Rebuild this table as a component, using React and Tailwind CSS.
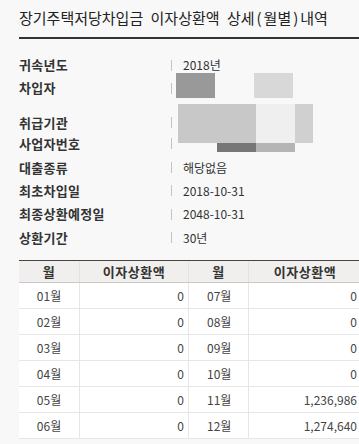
import React from "react";

const info = [
  { label: "귀속년도", value: "2018년", h: "h-[22px]" },
  { label: "차입자", value: "", h: "h-[24px]" },
  { label: "취급기관", value: "", h: "h-[21px] mt-[12px]" },
  { label: "사업자번호", value: "", h: "h-[21px]" },
  { label: "대출종류", value: "해당없음", h: "h-[23px] mt-[2px]" },
  { label: "최초차입일", value: "2018-10-31", h: "h-[23px]" },
  { label: "최종상환예정일", value: "2048-10-31", h: "h-[24px]" },
  { label: "상환기간", value: "30년", h: "h-[23px]" },
];

const months = [
  ["01월", "0", "07월", "0"],
  ["02월", "0", "08월", "0"],
  ["03월", "0", "09월", "0"],
  ["04월", "0", "10월", "0"],
  ["05월", "0", "11월", "1,236,986"],
  ["06월", "0", "12월", "1,274,640"],
];

const font = { fontFamily: '"Noto Sans CJK KR", "Noto Sans", sans-serif' };

export default function App() {
  return (
    <div className="w-[359px] h-[444px] overflow-hidden bg-[#f8f8f8]" style={font}>
      <div className="w-[400px] pl-[19px]">
        {/* title */}
        <div className="h-[37px] flex items-center text-[15px] text-[#222] whitespace-nowrap [word-spacing:4px]">
          장기주택저당차입금 이자상환액 상세<span className="px-[2px]">(</span>월별<span className="px-[2px]">)</span>내역
        </div>
        <div className="h-[2px] bg-[#333]" />

        {/* info rows */}
        <div className="relative pt-[15px]">
          {info.map((row) => (
            <div key={row.label} className={`flex items-center ${row.h}`}>
              <div className="w-[152px] text-[13px] font-bold text-[#333] tracking-[0.3px]">{row.label}</div>
              <span className="w-px h-[11px] bg-[#c4c4c4]" />
              <div className="ml-[11px] text-[12px] text-[#333]">{row.value}</div>
            </div>
          ))}

          {/* redacted blocks */}
          <div className="absolute left-[157px] top-[34px] w-[39px] h-[25px] bg-[#999]" />
          <div className="absolute left-[235px] top-[34px] w-[39px] h-[25px] bg-[#d8d8d8]" />
          <div className="absolute left-[159px] top-[65px] w-[78px] h-[39px] bg-[#c8c8c8]" />
          <div className="absolute left-[237px] top-[65px] w-[39px] h-[39px] bg-[#efefef]" />
          <div className="absolute left-[276px] top-[65px] w-[18px] h-[39px] bg-[#d0d0d0]" />
          <div className="absolute left-[198px] top-[104px] w-[39px] h-[9px] bg-[#777]" />
          <div className="absolute left-[237px] top-[104px] w-[39px] h-[9px] bg-[#b5b5b5]" />
        </div>

        {/* table */}
        <div className="mt-[11px] w-[342px] border-t border-[#444]">
          <div className="grid grid-cols-[61px_109px_60px_112px] h-[22px] bg-[#f0efed] border-b border-[#c8c8c8] text-[13px] font-bold text-[#333] tracking-[0.5px]">
            <div className="flex items-center justify-center border-r border-[#e2e2e2]">월</div>
            <div className="flex items-center justify-center border-r border-[#e2e2e2]">이자상환액</div>
            <div className="flex items-center justify-center border-r border-[#e2e2e2]">월</div>
            <div className="flex items-center justify-center">이자상환액</div>
          </div>
          {months.map((r) => (
            <div
              key={r[0]}
              className="grid grid-cols-[61px_109px_60px_112px] h-[26px] bg-white border-b border-[#e6e6e6] text-[12px] text-[#444]"
            >
              <div className="flex items-center justify-center border-r border-[#e6e6e6]">{r[0]}</div>
              <div className="flex items-center justify-end pr-[4px] border-r border-[#e6e6e6]">{r[1]}</div>
              <div className="flex items-center pl-[18px] border-r border-[#e6e6e6]">{r[2]}</div>
              <div className="flex items-center justify-end pr-[4px]">{r[3]}</div>
            </div>
          ))}
        </div>
      </div>
    </div>
  );
}
